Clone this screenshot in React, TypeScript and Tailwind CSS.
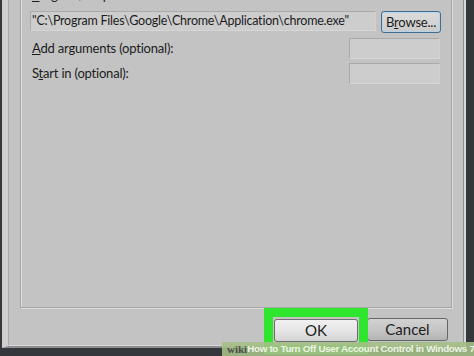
import React from 'react';

const font = { fontFamily: 'Lato, "Noto Sans", sans-serif' };

const Field = ({ className, children }: { className: string; children?: React.ReactNode }) => (
  <div className={`border border-[#aaaaaa] border-b-[#d6d6d6] border-r-[#d2d2d2] bg-[#cdcdcd] ${className}`}>
    {children}
  </div>
);

const App = () => {
  return (
    <div
      className="relative w-[474px] h-[356px] overflow-hidden bg-[#34373c] pl-[2px] pr-[8px] text-[#1c1c1c]"
      style={font}
    >
      {/* dialog window */}
      <div className="h-[348px] border-l-[6px] border-l-[#cfcfcf] border-r-2 border-r-[#d8d8d8] border-b-2 border-b-[#8e8e8e] bg-[#c3c3c3]">
        <div className="h-full border-l border-l-[#a9a9a9] border-r border-r-[#8f8f8f] border-b border-b-[#d8d8d8] px-[11px] flex flex-col">
          <div className="-mt-[18px] h-[326px] border border-[#a6a6a6] shadow-[inset_1px_1px_0_#dcdcdc,1px_1px_0_#dcdcdc] pl-[9px] pr-[10px] pt-[4px]">
            <div className="text-[13px] leading-[16px] pl-[2px] tracking-[-0.2px]">
              <span className="underline">P</span>rogram/script:
            </div>
            <div className="mt-[8px] flex items-start gap-[5px]">
              <Field className="w-[347px] h-[20px] flex items-center pl-[1px]">
                <span className="text-[12.5px] leading-none whitespace-nowrap tracking-[-0.22px]">
                  "C:\Program Files\Google\Chrome\Application\chrome.exe"
                </span>
              </Field>
              <button className="w-[60px] h-[22px] rounded-[3px] border border-[#3f6f98] shadow-[inset_0_0_0_1px_#b7d3e6] bg-gradient-to-b from-[#dcdcdc] to-[#cbcbcb] text-[13px] leading-none text-[#1c1c1c] tracking-[-0.2px]">
                B<span className="underline">r</span>owse...
              </button>
            </div>
            <div className="mt-[5px] flex items-center justify-between">
              <div className="pl-[2px] text-[13px] leading-none tracking-[-0.2px]">
                <span className="underline">A</span>dd arguments (optional):
              </div>
              <Field className="w-[91px] h-[21px] mr-[1px]" />
            </div>
            <div className="mt-[4px] flex items-center justify-between">
              <div className="pl-[2px] text-[13px] leading-none tracking-[-0.2px]">
                S<span className="underline">t</span>art in (optional):
              </div>
              <Field className="w-[91px] h-[21px] mr-[1px]" />
            </div>
          </div>

          {/* buttons */}
          <div className="mt-[10px] flex justify-end gap-[9px] pr-[4px]">
            <div className="relative">
              <button className="w-[84px] h-[23px] rounded-[3px] border border-[#6e6e6e] bg-gradient-to-b from-[#f1f1f1] via-[#e6e6e6] to-[#d4d4d4] text-[15px] leading-none text-[#1c1c1c]">
                OK
              </button>
              <span className="pointer-events-none absolute -left-[10px] -top-[10px] -right-[10px] -bottom-[12px] border-[9px] border-[#2fe62f]" />
            </div>
            <button className="w-[81px] h-[23px] rounded-[3px] border border-[#666666] bg-gradient-to-b from-[#d2d2d2] via-[#c6c6c6] to-[#b4b4b4] text-[15px] leading-none text-[#1c1c1c]">
              Cancel
            </button>
          </div>
        </div>
      </div>

      {/* wikiHow caption */}
      <div
        className="absolute right-0 bottom-0 w-[252px] h-[14px] bg-[#a3bf85]/90 flex items-center pl-[5px] whitespace-nowrap text-[9.8px] leading-none font-bold tracking-[-0.3px]"
        style={{ fontFamily: '"Liberation Sans", Arial, sans-serif' }}
      >
        <span className="text-[#4d4d4d] text-[11px] tracking-normal" style={{ fontFamily: '"Liberation Serif", serif' }}>wiki</span>
        <span className="text-[#eef4e6]">How</span>
        <span className="text-[#eef4e6]">&nbsp;to Turn Off User Account Control in Windows 7</span>
      </div>
    </div>
  );
};

export default App;
